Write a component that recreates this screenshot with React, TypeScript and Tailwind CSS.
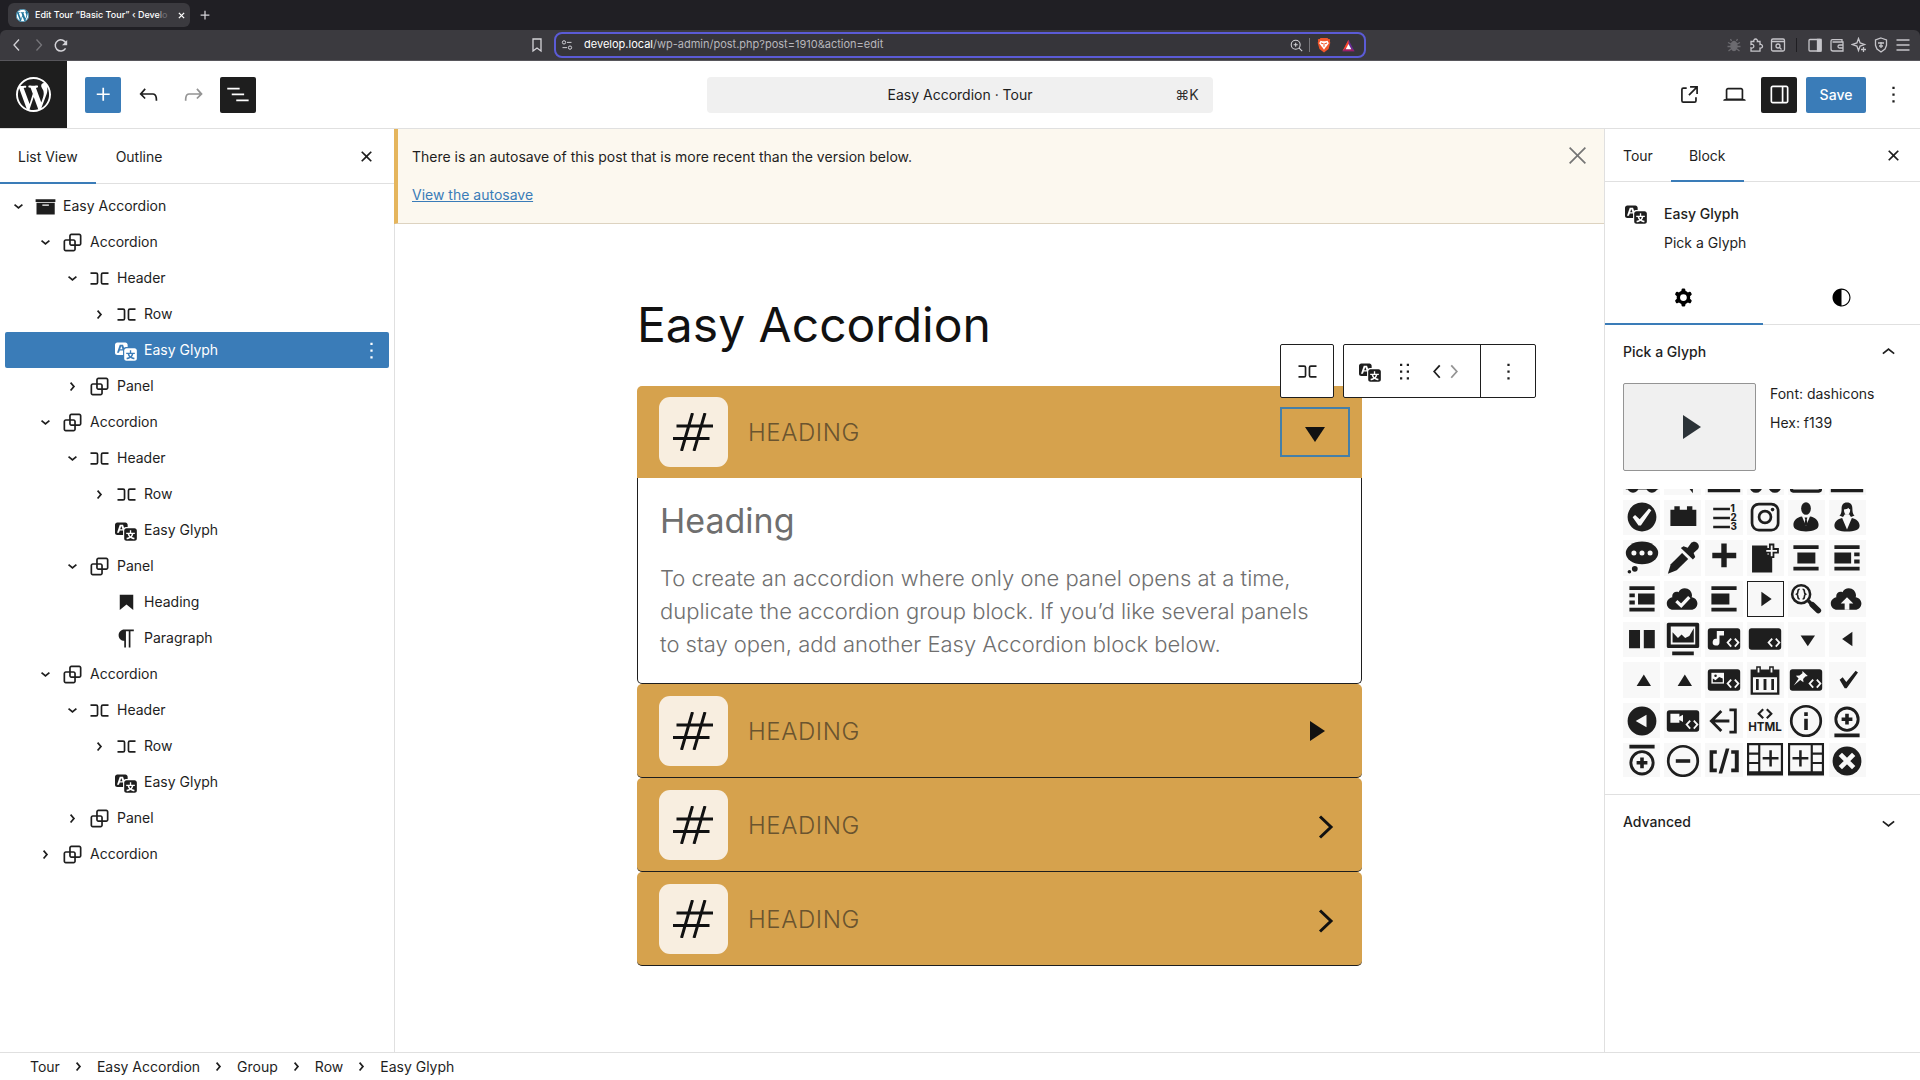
import { useState, type ReactNode } from 'react';
import clsx from 'clsx';

// 24px editor icons
const ICONS = {
  plus: 'M11 12.5V17.5H12.5V12.5H17.5V11H12.5V6H11V11H6V12.5H11Z',
  undo: 'M18.3 11.7c-.6-.6-1.4-.9-2.3-.9H6.7l2.9-3.3-1.1-1-4.5 5L8.5 16l1-1-2.7-2.7H16c.5 0 .9.2 1.3.5 1 1 1 3.4 1 4.5v.3h1.5v-.2c0-1.5 0-4.3-1.5-5.7z',
  redo: 'M15.6 6.5l-1.1 1 2.9 3.3H8c-.9 0-1.7.3-2.3.9-1.4 1.5-1.4 4.2-1.4 5.6v.2h1.5v-.3c0-1.1 0-3.5 1-4.5.3-.3.7-.5 1.3-.5h9.2L14.5 15l1.1 1.1 4.6-4.6-4.6-5z',
  listView: 'M2 6h11v1.5H2V6Zm4 5.2h11v1.5H6v-1.5ZM21 16.5H10V18h11v-1.5Z',
  external:
    'M19.5 4.5h-7V6h4.44l-5.97 5.97 1.06 1.06L18 7.06v4.44h1.5v-7Zm-13 1a2 2 0 0 0-2 2v10a2 2 0 0 0 2 2h10a2 2 0 0 0 2-2v-3H17v3a.5.5 0 0 1-.5.5h-10a.5.5 0 0 1-.5-.5v-10a.5.5 0 0 1 .5-.5h3V5.5h-3Z',
  desktop:
    'M20.5 16h-.7V8c0-1.1-.9-2-2-2H6.2c-1.1 0-2 .9-2 2v8h-.7c-.8 0-1.5.7-1.5 1.5h20c0-.8-.7-1.5-1.5-1.5zM5.7 8c0-.3.2-.5.5-.5h11.6c.3 0 .5.2.5.5v7.6H5.7V8z',
  drawer:
    'M18 4H6c-1.1 0-2 .9-2 2v12c0 1.1.9 2 2 2h12c1.1 0 2-.9 2-2V6c0-1.1-.9-2-2-2zm-4 14.5H6c-.3 0-.5-.2-.5-.5V6c0-.3.2-.5.5-.5h8v13zm4.5-.5c0 .3-.2.5-.5.5h-2.5v-13H18c.3 0 .5.2.5.5v12z',
  more: 'M13 19h-2v-2h2v2zm0-6h-2v-2h2v2zm0-6h-2V5h2v2z',
  closeSmall:
    'M12 13.06l3.712 3.713 1.061-1.06L13.061 12l3.712-3.712-1.06-1.06L12 10.938 8.288 7.227l-1.061 1.06L10.939 12l-3.712 3.712 1.06 1.061L12 13.061z',
  close:
    'm13.06 12 6.47-6.47-1.06-1.06L12 10.94 5.53 4.47 4.47 5.53 10.94 12l-6.47 6.47 1.06 1.06L12 13.06l6.47 6.47 1.06-1.06L13.06 12Z',
  chevronDown: 'M17.5 11.6L12 16l-5.5-4.4.9-1.2L12 14l4.5-3.6 1 1.2z',
  chevronUp: 'M6.5 12.4L12 8l5.5 4.4-.9 1.2L12 10l-4.5 3.6-1-1.2z',
  chevronSmall: 'M10.862 8.04l3.418 3.989-3.418 3.988-1.139-.976 2.582-3.012-2.582-3.012 1.139-.977z',
  chevronLeft: 'M14.6 7l-1.2-1L8 12l5.4 6 1.2-1-4.6-5z',
  chevronRight: 'M10.6 6L9.4 7l4.6 5-4.6 5 1.2 1 5.4-6z',
  drag: 'M8 7h2V5H8v2zm0 6h2v-2H8v2zm0 6h2v-2H8v2zm6-14v2h2V5h-2zm0 8h2v-2h-2v2zm0 6h2v-2h-2v2z',
  group:
    'M18 4h-7c-1.1 0-2 .9-2 2v3H6c-1.1 0-2 .9-2 2v7c0 1.1.9 2 2 2h7c1.1 0 2-.9 2-2v-3h3c1.1 0 2-.9 2-2V6c0-1.1-.9-2-2-2zm-4.5 14c0 .3-.2.5-.5.5H6c-.3 0-.5-.2-.5-.5v-7c0-.3.2-.5.5-.5h3V13c0 1.1.9 2 2 2h2.5v3zm0-4.5H11c-.3 0-.5-.2-.5-.5v-2.5H13c.3 0 .5.2.5.5v2.5zm5-.5c0 .3-.2.5-.5.5h-3V11c0-1.1-.9-2-2-2h-2.5V6c0-.3.2-.5.5-.5h7c.3 0 .5.2.5.5v7z',
  row: 'M4 6.5h5a2 2 0 0 1 2 2v7a2 2 0 0 1-2 2H4V16h5a.5.5 0 0 0 .5-.5v-7A.5.5 0 0 0 9 8H4V6.5Zm16 0h-5a2 2 0 0 0-2 2v7a2 2 0 0 0 2 2h5V16h-5a.5.5 0 0 1-.5-.5v-7A.5.5 0 0 1 15 8h5V6.5Z',
  heading: 'M6 5V18.591L12 13.847L18 18.591V5H6Z',
  paragraph:
    'm9.996 14v-.225l.004 0v6.225h1.5v-14.5h2.5v14.5h1.5v-14.5h3v-1.5h-8.504c-2.761 0-5 2.239-5 5 0 2.761 2.239 5 5 5z',
  cog: 'M10.289 4.836A1 1 0 0111.275 4h1.306a1 1 0 01.987.836l.244 1.466c.787.26 1.503.679 2.108 1.218l1.393-.522a1 1 0 011.216.437l.653 1.13a1 1 0 01-.23 1.273l-1.148.944a6.025 6.025 0 010 2.435l1.149.946a1 1 0 01.23 1.272l-.653 1.13a1 1 0 01-1.216.437l-1.394-.522c-.605.54-1.32.958-2.108 1.218l-.244 1.466a1 1 0 01-.987.836h-1.306a1 1 0 01-.986-.836l-.244-1.466a5.995 5.995 0 01-2.108-1.218l-1.394.522a1 1 0 01-1.217-.436l-.653-1.131a1 1 0 01.23-1.272l1.149-.946a6.026 6.026 0 010-2.435l-1.148-.944a1 1 0 01-.23-1.272l.653-1.131a1 1 0 011.217-.437l1.393.522a5.994 5.994 0 012.108-1.218l.244-1.466zM14.929 12a3 3 0 11-6 0 3 3 0 016 0z',
  styles:
    'M12 4c-4.4 0-8 3.6-8 8v.1c0 4.1 3.2 7.5 7.2 7.9h.8c4.4 0 8-3.6 8-8s-3.6-8-8-8zm0 15V5c3.9 0 7 3.1 7 7s-3.1 7-7 7z',
  archive: 'M3.2 5.6h17.6V8H3.2zM4 8.6h16.2v10.6H4zM9.2 10.2v1.2h5.8v-1.2z',
};

type IconName = keyof typeof ICONS;

function Icon({ name, className = 'size-[27px]' }: { name: IconName; className?: string }) {
  return (
    <svg viewBox="0 0 24 24" fill="currentColor" fillRule="evenodd" className={clsx('shrink-0', className)} aria-hidden="true">
      <path d={ICONS[name]} />
    </svg>
  );
}

function GlyphIcon({ className = 'size-[23px]' }: { className?: string }) {
  return (
    <svg viewBox="0 0 20 20" fill="currentColor" className={clsx('shrink-0', className)} aria-hidden="true">
      <path d="M11 7H9.49c-.63 0-1.25.3-1.59.7L7 5H4.13l-2.39 7h1.69l.74-2H7v4H2c-1.1 0-2-.9-2-2V5c0-1.1.9-2 2-2h7c1.1 0 2 .9 2 2v2zM6.51 9H4.49l1-2.93zM10 8h7c1.1 0 2 .9 2 2v7c0 1.1-.9 2-2 2h-7c-1.1 0-2-.9-2-2v-7c0-1.1.9-2 2-2zm7.25 5v-1.08h-3.17V9.75h-1.16v2.17H9.75V13h1.28c.11.85.56 1.85 1.28 2.62-.87.36-1.89.62-2.31.62-.01.02.22.97.2 1.46.84 0 2.21-.5 3.28-1.15 1.09.65 2.48 1.15 3.34 1.15-.02-.49.2-1.44.2-1.46-.43 0-1.49-.27-2.38-.63.7-.77 1.14-1.77 1.25-2.61h1.36zm-3.81 1.93c-.5-.46-.85-1.13-1.01-1.93h2.09c-.17.8-.51 1.47-1 1.93l-.04.03s-.03-.02-.04-.03z" />
    </svg>
  );
}

function WordPressLogo({ className }: { className: string }) {
  return (
    <svg viewBox="0 0 20 20" fill="currentColor" className={className} aria-hidden="true">
      <path d="M20 10c0-5.51-4.49-10-10-10C4.48 0 0 4.49 0 10c0 5.52 4.48 10 10 10 5.51 0 10-4.48 10-10zM7.78 15.37L4.37 6.22c.55-.02 1.17-.08 1.17-.08.5-.06.44-1.13-.06-1.11 0 0-1.45.11-2.37.11-.18 0-.37 0-.58-.01C4.12 2.69 6.87 1.11 10 1.11c2.33 0 4.45.87 6.05 2.34-.68-.11-1.65.39-1.65 1.58 0 .74.45 1.36.9 2.1.35.61.55 1.36.55 2.46 0 1.49-1.4 5-1.4 5l-3.03-8.37c.54-.02.82-.17.82-.17.5-.05.44-1.25-.06-1.22 0 0-1.44.12-2.38.12-.87 0-2.33-.12-2.33-.12-.5-.03-.56 1.2-.06 1.22l.92.08 1.26 3.41zM17.41 10c.24-.64.74-1.87.43-4.25.7 1.29 1.05 2.71 1.05 4.25 0 3.29-1.73 6.24-4.4 7.78.97-2.59 1.94-5.2 2.92-7.78zM6.1 18.09C3.12 16.65 1.11 13.53 1.11 10c0-1.3.23-2.48.72-3.59C3.25 10.3 4.67 14.2 6.1 18.09zm4.03-6.63l2.58 6.98c-.86.29-1.76.45-2.71.45-.79 0-1.57-.11-2.29-.33.81-2.38 1.62-4.74 2.42-7.1z" />
    </svg>
  );
}

/* ---------- Browser chrome ---------- */

function ChromeIcon({ label, children, className = 'size-4' }: { label: string; children: ReactNode; className?: string }) {
  return (
    <button type="button" aria-label={label} className="flex w-[22px] shrink-0 items-center justify-center">
      <svg viewBox="0 0 16 16" fill="none" stroke="currentColor" strokeWidth="1.3" className={className}>
        {children}
      </svg>
    </button>
  );
}

function BrowserChrome() {
  return (
    <div className="shrink-0 bg-[#201f24] text-[11px] text-[#d4d3d8]">
      <div className="flex h-[30px] items-center gap-2.5 pl-2">
        <div className="flex h-6 w-[182px] items-center gap-1.5 rounded-md bg-[#3b3a3f] pl-2 pr-1">
          <span className="flex size-[13px] shrink-0 items-center justify-center rounded-full bg-white">
            <WordPressLogo className="size-[13px] text-[#21759b]" />
          </span>
          <span className="flex-1 whitespace-nowrap text-[9px] font-medium text-white">
            Edit Tour “Basic Tour” ‹ Deve<span className="text-[#9b9a9f]">l</span>
            <span className="text-[#6c6b70]">o</span>
          </span>
          <button type="button" aria-label="Close tab" className="flex w-4 shrink-0 justify-center text-white">
            <svg viewBox="0 0 8 8" className="size-[7px]" stroke="currentColor" strokeWidth="1.5">
              <path d="M1 1l6 6M7 1L1 7" />
            </svg>
          </button>
        </div>
        <button type="button" aria-label="New tab">
          <svg viewBox="0 0 8 8" className="size-2.5" stroke="currentColor" strokeWidth="1">
            <path d="M4 .5v7M.5 4h7" />
          </svg>
        </button>
      </div>
      <div className="flex h-[31px] items-center rounded-t-md border-b border-[#57565b] bg-[#3b3a3f]">
        <div className="flex flex-1 items-center justify-between px-1.5">
          <div className="flex">
            <ChromeIcon label="Back">
              <path d="M10 2.5L5 8l5 5.5" />
            </ChromeIcon>
            <span className="text-[#77767b]">
              <ChromeIcon label="Forward">
                <path d="M5.5 2.5l5 5.5-5 5.5" />
              </ChromeIcon>
            </span>
            <ChromeIcon label="Reload">
              <path d="M12.6 11.4A5.6 5.6 0 1 1 13.2 6.8" strokeWidth="1.5" />
              <path d="M14.2 3v5.3H9z" fill="currentColor" stroke="none" />
            </ChromeIcon>
          </div>
          <ChromeIcon label="Bookmark">
            <path d="M4 2h8v12l-4-3-4 3z" />
          </ChromeIcon>
        </div>
        <div className="flex h-[26px] w-[812px] items-center rounded-lg border-2 border-[#5b5bd6] bg-[#36353a] pr-1">
          <ChromeIcon label="Site settings" className="size-3">
            <circle cx="4" cy="4.5" r="2.2" />
            <path d="M8 4.5h6M2 11.5h6" />
            <circle cx="12" cy="11.5" r="2.2" />
          </ChromeIcon>
          <span className="flex-1 pl-1.5 text-[#b8b7bc]">
            <span className="text-white">develop.local</span>/wp-admin/post.php?post=1910&amp;action=edit
          </span>
          <ChromeIcon label="Zoom" className="size-[13px]">
            <circle cx="7" cy="7" r="5.5" />
            <path d="M11 11l4 4M7 4.5v5M4.5 7h5" />
          </ChromeIcon>
          <span className="mx-0.5 h-3.5 w-px bg-[#77767b]" />
          <button type="button" aria-label="Brave Shields" className="flex w-6 justify-center">
            <svg viewBox="0 0 16 18" className="h-4 w-3.5">
              <path d="M4 1h8l1 1 2 .5-.3 2.5.5 1.5-2 7-5.2 4-5.2-4-2-7L1.3 5 1 2.5 3 2z" fill="#f1562b" />
              <path d="M4 4l2.5.8h3L12 4l1.5 3-2.5 3.5L9.500 12 8 14.500 6.500 12 5 10.500 2.500 7z" fill="#fff" />
              <path d="M4.500 6.800l2.500.7M11.500 6.800L9 7.500M8 7v4" stroke="#f1562b" strokeWidth="1.2" />
            </svg>
          </button>
          <button type="button" aria-label="Brave Rewards" className="flex w-6 justify-center">
            <svg viewBox="0 0 16 16" className="size-[13px]">
              <path d="M8 1L.5 15h15z" fill="#662d91" />
              <path d="M8 1L.5 15 8 9z" fill="#ff4724" />
              <path d="M.5 15h15L8 9z" fill="#9e1f63" />
              <path d="M8 6l-3.500 6.500h7z" fill="#fff" />
            </svg>
          </button>
        </div>
        <div className="flex flex-1 items-center justify-end px-1.5 text-[#c6c5ca]">
          <span className="text-[#6c6b70]">
            <ChromeIcon label="Debugger">
              <ellipse cx="8" cy="9" rx="3" ry="4.5" fill="currentColor" />
              <path d="M5.500 4l-1-2M10.500 4l1-2M5 7L2 5.500M5 9.500H1.500M5 12l-2.500 2M11 7l3-1.500M11 9.500h3.500M11 12l2.500 2" />
            </ChromeIcon>
          </span>
          <ChromeIcon label="Extensions">
            <path d="M3 4.500h2.800a1.900 1.900 0 1 1 3.600 0H12v3a1.900 1.900 0 1 1 0 3.600v3H3v-3.300a1.900 1.900 0 1 0 0-3.300z" />
          </ChromeIcon>
          <ChromeIcon label="Search tabs">
            <rect x="1.5" y="2" width="13" height="12" rx="1.5" />
            <path d="M1.500 4.500h13M9.700 10.700l1.800 1.800" />
            <circle cx="8" cy="9" r="2" />
          </ChromeIcon>
          <span className="mx-[7px] h-3.5 w-px bg-[#1f1e22]" />
          <ChromeIcon label="Side panel">
            <rect x="2" y="2.5" width="12" height="11.5" rx="1" />
            <path d="M10.500 2.500H14V14h-3.500z" fill="currentColor" />
          </ChromeIcon>
          <ChromeIcon label="Wallet">
            <path d="M13 5V2.700H3.500A1.500 1.500 0 0 0 2 4.200V12a2 2 0 0 0 2 2h10V5H3.500M14 8h-3.500a1.500 1.500 0 0 0 0 3H14" />
          </ChromeIcon>
          <ChromeIcon label="Assistant">
            <path d="M7.500 1.500l1.600 4.400 4.400 1.600-4.400 1.600-1.600 4.400-1.600-4.400L1.500 7.500l4.400-1.600z" />
            <path d="M12.500 10v5M10 12.500h5" />
          </ChromeIcon>
          <ChromeIcon label="VPN">
            <path d="M8 1l5.500 2v5.300L12 12l-4 3-4-3-1.500-3.700V3z" />
            <path d="M5 6h6M8 5v6M6 9h4" />
          </ChromeIcon>
          <ChromeIcon label="Menu">
            <path d="M1.500 3h13M1.500 8h13M1.500 13h13" strokeWidth="1.5" />
          </ChromeIcon>
        </div>
      </div>
    </div>
  );
}

/* ---------- Editor header ---------- */

function EditorHeader() {
  return (
    <header className="flex h-[68px] shrink-0 items-center border-b border-[#e0e0e0]">
      <div className="flex h-full flex-1 items-center gap-[9px]">
        <a href="#dashboard" aria-label="Dashboard" className="mr-[9px] flex h-full w-[67px] items-center justify-center bg-[#1e1e1e]">
          <WordPressLogo className="size-[35px] text-white" />
        </a>
        <button type="button" aria-label="Block inserter" className="flex size-9 items-center justify-center rounded-xs bg-[#3a7cb8] text-white">
          <Icon name="plus" />
        </button>
        <button type="button" aria-label="Undo" className="flex size-9 items-center justify-center">
          <Icon name="undo" />
        </button>
        <button type="button" aria-label="Redo" disabled className="flex size-9 items-center justify-center text-[#949494]">
          <Icon name="redo" />
        </button>
        <button type="button" aria-label="Document overview" className="flex size-9 items-center justify-center rounded-xs bg-[#1e1e1e] text-white">
          <Icon name="listView" />
        </button>
      </div>
      <button type="button" className="flex h-9 w-[506px] items-center rounded-[4px] bg-[#f0f0f0] px-2.5">
        <span className="w-8" />
        <span className="flex-1 text-center">Easy Accordion · Tour</span>
        <kbd className="w-8 text-center font-[Inter,'DejaVu_Sans',sans-serif] text-[#2f2f2f]">⌘K</kbd>
      </button>
      <div className="flex flex-1 items-center justify-end gap-[9px]">
        <a href="#view" aria-label="View tour" className="flex size-9 items-center justify-center">
          <Icon name="external" />
        </a>
        <button type="button" aria-label="Preview" className="flex size-9 items-center justify-center">
          <Icon name="desktop" />
        </button>
        <button type="button" aria-label="Settings" className="flex size-9 items-center justify-center rounded-xs bg-[#1e1e1e] text-white">
          <Icon name="drawer" />
        </button>
        <button type="button" className="h-9 w-[60px] rounded-xs bg-[#3a7cb8] font-medium text-white">
          Save
        </button>
        <button type="button" aria-label="Options" className="mr-[9px] flex size-9 items-center justify-center">
          <Icon name="more" />
        </button>
      </div>
    </header>
  );
}

/* ---------- List view ---------- */

type TreeItem = { label: string; level: number; icon: IconName | 'glyph'; open?: boolean; selected?: boolean };

const TREE: TreeItem[] = [
  { label: 'Easy Accordion', level: 0, icon: 'archive', open: true },
  { label: 'Accordion', level: 1, icon: 'group', open: true },
  { label: 'Header', level: 2, icon: 'row', open: true },
  { label: 'Row', level: 3, icon: 'row', open: false },
  { label: 'Easy Glyph', level: 3, icon: 'glyph', selected: true },
  { label: 'Panel', level: 2, icon: 'group', open: false },
  { label: 'Accordion', level: 1, icon: 'group', open: true },
  { label: 'Header', level: 2, icon: 'row', open: true },
  { label: 'Row', level: 3, icon: 'row', open: false },
  { label: 'Easy Glyph', level: 3, icon: 'glyph' },
  { label: 'Panel', level: 2, icon: 'group', open: true },
  { label: 'Heading', level: 3, icon: 'heading' },
  { label: 'Paragraph', level: 3, icon: 'paragraph' },
  { label: 'Accordion', level: 1, icon: 'group', open: true },
  { label: 'Header', level: 2, icon: 'row', open: true },
  { label: 'Row', level: 3, icon: 'row', open: false },
  { label: 'Easy Glyph', level: 3, icon: 'glyph' },
  { label: 'Panel', level: 2, icon: 'group', open: false },
  { label: 'Accordion', level: 1, icon: 'group', open: false },
];

const INDENT = ['pl-0', 'pl-[27px]', 'pl-[54px]', 'pl-[81px]'];

function ListView() {
  return (
    <aside className="w-[394px] shrink-0">
      <div className="flex h-[55px] items-stretch border-b border-[#e0e0e0]">
        <button type="button" className="-mb-px border-b-2 border-[#3a7cb8] px-[18px] pt-0.5">
          List View
        </button>
        <button type="button" className="px-5 pt-px">
          Outline
        </button>
        <button type="button" aria-label="Close" className="ml-auto mr-3.5">
          <Icon name="closeSmall" />
        </button>
      </div>
      <ul className="px-[5px] py-1">
        {TREE.map((item, i) => (
          <li
            key={i}
            className={clsx(
              'flex h-9 items-center rounded-xs',
              INDENT[item.level],
              item.selected && 'bg-[#3a7cb8] text-white',
            )}
          >
            <span className="flex w-[27px] justify-center">
              {item.open !== undefined && (
                <button type="button" aria-label={`Toggle ${item.label}`}>
                  <Icon name="chevronSmall" className={clsx('size-[27px]', item.open && 'rotate-90')} />
                </button>
              )}
            </span>
            <a href="#block" className="flex items-center gap-1">
              <span className="flex w-[27px] justify-center">
                {item.icon === 'glyph' ? <GlyphIcon /> : <Icon name={item.icon} />}
              </span>
              {item.label}
            </a>
            {item.selected && (
              <button type="button" aria-label="Options" className="ml-auto mr-1">
                <Icon name="more" />
              </button>
            )}
          </li>
        ))}
      </ul>
    </aside>
  );
}

/* ---------- Canvas ---------- */

function BlockToolbar() {
  return (
    <div className="absolute -top-[65px] -left-0.5 z-10 flex gap-[9px] text-[#1e1e1e]">
      <button type="button" aria-label="Select parent: Row" className="flex size-[54px] items-center justify-center rounded-xs border border-[#1e1e1e] bg-white">
        <Icon name="row" />
      </button>
      <div className="flex h-[54px] rounded-xs border border-[#1e1e1e] bg-white">
        <div className="flex w-[137px] items-center border-r border-[#1e1e1e] pl-[15px]">
          <button type="button" aria-label="Easy Glyph">
            <GlyphIcon />
          </button>
          <button type="button" aria-label="Drag" className="ml-[9px]">
            <Icon name="drag" />
          </button>
          <button type="button" aria-label="Move left" className="ml-2.5 w-4">
            <Icon name="chevronLeft" className="-ml-1 size-[27px]" />
          </button>
          <button type="button" aria-label="Move right" className="w-4 text-[#949494]">
            <Icon name="chevronRight" className="-ml-1 size-[27px]" />
          </button>
        </div>
        <button type="button" aria-label="Options" className="flex w-[54px] items-center justify-center">
          <Icon name="more" />
        </button>
      </div>
    </div>
  );
}

function AccordionHeader({ variant }: { variant: 'down' | 'right' | 'chevron' }) {
  const open = variant === 'down';
  return (
    <div
      className={clsx(
        'flex items-center justify-between bg-[#d6a24d] pl-[22px] pr-3',
        open ? 'h-[92px] rounded-t-[5px]' : 'h-[94px] rounded-[5px] border-b border-[#1e1e1e]',
      )}
    >
      <div className="flex items-center gap-5">
        <span className="flex h-[70px] w-[69px] items-center justify-center rounded-[11px] bg-[#f8eee0] pr-0.5">
          <svg viewBox="0 0 40 38" className="h-[38px] w-10" stroke="#111" strokeWidth="3" aria-label="Number sign">
            <path d="M19.5 0l-11 38M32 0L21 38M3.5 13H40M0 25.5h36.5" />
          </svg>
        </span>
        <span className="pt-0.5 text-2xl font-light uppercase tracking-wide text-[#6a542f]">Heading</span>
      </div>
      {open ? (
        <div className="relative flex h-[50px] w-[70px] items-center justify-center border-2 border-[#447fa8]">
          <svg viewBox="0 0 20 15" className="mt-1 h-[15px] w-5" fill="#111">
            <path d="M0 0h20L10 15z" />
          </svg>
          <BlockToolbar />
        </div>
      ) : (
        <button type="button" aria-label="Expand" className={variant === 'right' ? 'mr-[25px]' : 'mr-4 mt-1'}>
          {variant === 'right' ? (
            <svg viewBox="0 0 15 20" className="h-5 w-[15px]" fill="#111">
              <path d="M0 0v20L15 10z" />
            </svg>
          ) : (
            <svg viewBox="0 0 16 24" className="h-6 w-4" fill="none" stroke="#111" strokeWidth="3">
              <path d="M2 1.5L13 12 2 22.5" />
            </svg>
          )}
        </button>
      )}
    </div>
  );
}

function Canvas() {
  return (
    <main className="flex min-w-0 flex-1 flex-col">
      <div className="flex h-[95px] items-start justify-between border-b border-l-4 border-b-[#ddd3c0] border-l-[#e5b55c] bg-[#fcf8ef] py-[13px] pl-3.5 pr-[13px]">
        <div>
          <p className="h-[38px] leading-[30px]">There is an autosave of this post that is more recent than the version below.</p>
          <a href="#autosave" className="leading-[30px] text-[#3a7cb8] underline">
            View the autosave
          </a>
        </div>
        <button type="button" aria-label="Dismiss" className="text-[#757575]">
          <Icon name="close" />
        </button>
      </div>
      <div className="flex-1 border-l border-[#e0e0e0] px-6">
        <div className="mx-auto w-full max-w-[725px] pt-[70px] text-[#111]">
          <h1 className="text-5xl leading-[62px]">Easy Accordion</h1>
          <div className="mt-[30px]">
            <AccordionHeader variant="down" />
            <section className="h-[206px] rounded-b-[5px] border border-t-0 border-[#1e1e1e] px-[22px] pt-5 text-[#6f6f6f]">
              <h2 className="text-[34px] leading-[46px]">Heading</h2>
              <p className="mt-[18px] pr-6 text-[22px] font-light leading-[33px]">
                To create an accordion where only one panel opens at a time, duplicate the accordion group block. If
                you’d like several panels to stay open, add another Easy Accordion block below.
              </p>
            </section>
            <AccordionHeader variant="right" />
            <AccordionHeader variant="chevron" />
            <AccordionHeader variant="chevron" />
          </div>
        </div>
      </div>
    </main>
  );
}

/* ---------- Glyph picker ---------- */

// Drawn on a 20 unit grid; "knockout" shapes use the cell background
const BG = '#f8f8f8';
const CLOUD =
  'M14.8 9c.1-.3.2-.6.2-1 0-2.2-1.8-4-4-4-1.5 0-2.9.9-3.5 2.2-.3-.1-.7-.2-1-.2C5.1 6 4 7.1 4 8.5c0 .2 0 .4.1.5-1.8.3-3.1 1.7-3.1 3.5C1 14.4 2.6 16 4.5 16h10c1.9 0 3.5-1.6 3.5-3.5 0-1.8-1.4-3.3-3.2-3.5z';
const BARS = 'M3 2.9h14V5H3zM3 14.9h14V17H3z';

const embed = (inner?: ReactNode) => (
  <>
    <rect x="1" y="4" width="18" height="12" rx="1.5" />
    <path d="M14 9.8L12 12l2 2.2M16 9.8l2 2.2-2 2.2" fill="none" stroke={BG} strokeWidth="1" />
    {inner}
  </>
);

const GLYPHS: { name: string; art: ReactNode }[] = [
  { name: 'car', art: <><circle cx="5" cy="15.5" r="3.2" /><circle cx="15.5" cy="15.5" r="3.2" /><path d="M1 14h18v3H1z" /></> },
  { name: 'megaphone', art: <path d="M11.5 14h4v5z" /> },
  { name: 'cover', art: <path d="M1 16h18v2.5H1z" /> },
  { name: 'binoculars', art: <><circle cx="5" cy="15.3" r="3.5" /><circle cx="15.5" cy="15.3" r="3.5" /></> },
  { name: 'frame', art: <rect x="2" y="8" width="16" height="9.8" rx=".8" fill="none" stroke="currentColor" strokeWidth="1.8" /> },
  { name: 'button', art: <path d="M1 16.5h18v2H1z" /> },

  {
    name: 'yes-alt',
    art: <path d="M10 2c-4.42 0-8 3.58-8 8s3.58 8 8 8 8-3.58 8-8-3.58-8-8-8zm-.615 12.66h-1.34l-3.24-4.54 1.341-1.25 2.569 2.4 5.141-5.931 1.34.94-5.811 8.381z" />,
  },
  { name: 'block-default', art: <path d="M3 6h2.2V4h3v2h4V4h3v2h2.2v9H3z" /> },
  {
    name: 'editor-ol',
    art: (
      <>
        <path d="M4 4.9h9.3v1.4H4zM4 9.9h9.3v1.4H4zM4 14.9h9.3v1.4H4z" />
        <text x="13.6" y="7" fontSize="5.4" fontWeight="800">1</text>
        <text x="13.6" y="12.2" fontSize="5.4" fontWeight="800">2</text>
        <text x="13.6" y="17.4" fontSize="5.4" fontWeight="800">3</text>
      </>
    ),
  },
  {
    name: 'instagram',
    art: (
      <>
        <g fill="none" stroke="currentColor" strokeWidth="1.5">
          <rect x="2.8" y="2.8" width="14.5" height="14.5" rx="3.8" />
          <circle cx="10" cy="10" r="3.3" />
        </g>
        <circle cx="14.2" cy="5.9" r="1" />
      </>
    ),
  },
  {
    name: 'businessman',
    art: (
      <>
        <ellipse cx="10" cy="5.3" rx="2.7" ry="3.5" />
        <path d="M7.8 9.7L10 15l2.2-5.3c2.8.4 4.8 2 4.8 4.8 0 2.5-3 3.5-7 3.5s-7-1-7-3.5c0-2.8 2-4.4 4.8-4.8z" />
        <path d="M9.2 10.3h1.6l-.4 1.2.5 2.2-.9 1.3-.9-1.3.5-2.2z" />
      </>
    ),
  },
  {
    name: 'businesswoman',
    art: (
      <>
        <path d="M10 2c-2.2 0-3 1.5-3 3.5C7 7 6.8 8.5 5.8 9.2l2 .8 1-1.5h2.4l1 1.5 2-.8C13.2 8.5 13 7 13 5.5 13 3.5 12.2 2 10 2z" />
        <path d="M7.3 10.5L10 17l2.7-6.5c2.5.5 4.3 2 4.3 4.3 0 2.3-3 3.2-7 3.2s-7-.9-7-3.2c0-2.3 1.8-3.8 4.3-4.3z" />
        <path d="M8.3 5.8c1.2 0 2-.4 2.5-1 .2.6.5.9 1 1 0 1.8-.8 3-1.8 3s-1.7-1.2-1.7-3zM9 11h2l-1 4z" fill={BG} />
      </>
    ),
  },

  {
    name: 'thought',
    art: (
      <>
        <ellipse cx="10" cy="7.2" rx="9" ry="6.3" />
        <circle cx="6" cy="16" r="1.6" />
        <circle cx="3" cy="17.6" r="1" />
        <g fill={BG}>
          <circle cx="5.5" cy="7.2" r="1.4" />
          <circle cx="10" cy="7.2" r="1.4" />
          <circle cx="14.5" cy="7.2" r="1.4" />
        </g>
      </>
    ),
  },
  {
    name: 'color-picker',
    art: (
      <>
        <path d="M9.5 7.2l3.4 3.4-6.4 6.2-4.9 1.9 1.6-5.2z" />
        <path d="M8.8 4.5l1.5-1 2.3.8 1.7-2.4c2.3-2.5 6 .8 3.9 3.3l-2.3 2 .9 2.2-1.3 1.5z" />
      </>
    ),
  },
  { name: 'plus-alt', art: <path d="M8.5 2h3v5.1h5.3v3h-5.3v5.1h-3v-5.1H3.5v-3h5z" /> },
  {
    name: 'welcome-add-page',
    art: (
      <>
        <path d="M2.8 3h8.5v5h2.7v10H2.8z" />
        <path d="M12.2 2h3v2.5h2.5v3h-2.500V10h-3V7.5H9.7v-3h2.5z" />
        <path d="M13.2 3h1v2.5h2.5v1h-2.500V9h-1V6.5h-2.500v-1h2.5z" fill={BG} />
      </>
    ),
  },
  { name: 'align-center', art: <path d={BARS + 'M5.2 6.9h10V13h-10z'} /> },
  { name: 'align-pull-left', art: <path d={BARS + 'M3 6.9h9.3V13H3zM14 6.9h3V9h-3zM14 10.9h3V13h-3z'} /> },

  { name: 'align-pull-right', art: <path d={BARS + 'M7.8 6.9H17V13H7.8zM3 6.9h3V9H3zM3 10.9h3V13H3z'} /> },
  {
    name: 'cloud-saved',
    art: (
      <>
        <path d={CLOUD} />
        <path d="M6.3 11.2L9 13.7l4.5-4.8" fill="none" stroke={BG} strokeWidth="1.8" />
      </>
    ),
  },
  { name: 'align-left', art: <path d={BARS + 'M3 6.9h10V13H3z'} /> },
  { name: 'arrow-right', art: <path d="M8 6l5.7 4L8 14z" /> },
  {
    name: 'code-search',
    art: (
      <>
        <circle cx="7.3" cy="7.3" r="5" fill="none" stroke="currentColor" strokeWidth="1.4" />
        <path d="M6.5 4.6c-1 0-1 .4-1 1.2s0 1.1-.7 1.5c.7.4.7.7.7 1.5s0 1.2 1 1.2M8.1 4.6c1 0 1 .4 1 1.2s0 1.1.7 1.5c-.7.4-.7.7-.7 1.5s0 1.2-1 1.2" fill="none" stroke="currentColor" strokeWidth=".9" />
        <path d="M11.3 11l2 2" stroke="currentColor" strokeWidth="2" />
        <path d="M13.5 13.2l3.3 3.2" stroke="currentColor" strokeWidth="3.2" strokeLinecap="round" />
      </>
    ),
  },
  {
    name: 'cloud-upload',
    art: (
      <>
        <path d={CLOUD} />
        <path d="M10 9l3.5 3.5h-2.2V16H8.7v-3.5H6.5z" fill={BG} />
      </>
    ),
  },

  { name: 'columns', art: <path d="M2.8 5h6.1v10.2H2.8zM11 5h6.1v10.2H11z" /> },
  {
    name: 'analytics',
    art: (
      <>
        <path fillRule="evenodd" d="M2 1h16c.7 0 1 .4 1 1v12c0 .6-.3 1-1 1H2c-.7 0-1-.4-1-1V2c0-.6.3-1 1-1zm1.2 2v10h13.6V3zM4 17h12v2H4z" />
        <path d="M4.2 6.2l3 3.3 2-2 2 2 2.3-1.2L16 4v8H4.2z" />
      </>
    ),
  },
  {
    name: 'embed-audio',
    art: embed(<path d="M6 5.5h4V8H7.5v3.8a1.9 1.9 0 1 1-1.5-1.9z" fill={BG} />),
  },
  { name: 'embed-generic', art: embed() },
  { name: 'arrow-down', art: <path d="M7 8h8l-4 6z" /> },
  { name: 'arrow-left', art: <path d="M13 6v8L7.3 10z" /> },

  { name: 'arrow-up', art: <path d="M7 13.3L11 7l4 6.3z" /> },
  { name: 'arrow-up-alt', art: <path d="M7 13.3L11 7l4 6.3z" /> },
  {
    name: 'embed-photo',
    art: embed(
      <>
        <path d="M3 6h7v6H3z" fill={BG} />
        <path d="M3.8 11.2v-2l1.5 1 2-1.8 2 .8v2z" />
        <circle cx="5.3" cy="7.7" r=".7" />
      </>,
    ),
  },
  {
    name: 'calendar-alt',
    art: (
      <>
        <path fillRule="evenodd" d="M2 4.2h16v14H2zm1.3 4.3v8.4h13.4V8.5z" />
        <path d="M5 9.5h1.5v6H5zM9.2 9.5h1.6v6H9.2zM13.5 9.5H15v6h-1.5z" />
        <path d="M5.5 2.8h1.8v3.5H5.500zM12.7 2.8h1.8v3.5h-1.800z" fill={BG} stroke="currentColor" strokeWidth=".8" />
      </>
    ),
  },
  {
    name: 'embed-post',
    art: embed(<path d="M8 5l3 2.8-1.3.2-1.3 1.5.2 1.8-1.8-1.3L3.2 13l2.7-3.9-1.5-1.4 2-.2L8 6.2z" fill={BG} />),
  },
  { name: 'yes', art: <path d="M14.8 4.9l1.3.9-6.3 8.8H8.7L5.9 9.8l1.7-1.3 2 2.6z" /> },

  { name: 'arrow-left-circle', art: <path fillRule="evenodd" d="M10 2a8 8 0 1 0 0 16 8 8 0 0 0 0-16zm2.5 4.5v7L6.5 10z" /> },
  {
    name: 'embed-video',
    art: embed(<path d="M3 6h5v1.7l2-1.2v4l-2-1V11H3z" fill={BG} />),
  },
  {
    name: 'exit',
    art: <path d="M13 3.8h3.3v12.4H13M13 10H3M8.5 4.5L3 10l5.5 5.5" fill="none" stroke="currentColor" strokeWidth="1.6" />,
  },
  {
    name: 'html',
    art: (
      <>
        <path d="M9 3.5L6.5 6 9 8.5M11 3.5L13.5 6 11 8.5" fill="none" stroke="currentColor" strokeWidth="1.2" />
        <text x="10" y="15.8" fontSize="6.4" fontWeight="700" textAnchor="middle">HTML</text>
      </>
    ),
  },
  {
    name: 'info-outline',
    art: (
      <>
        <circle cx="10" cy="10" r="8.2" fill="none" stroke="currentColor" strokeWidth="1.5" />
        <path d="M9 8.8h2V15H9zM9 5.2h2v2H9z" />
      </>
    ),
  },
  {
    name: 'insert-after',
    art: (
      <>
        <circle cx="10" cy="9" r="6.2" fill="none" stroke="currentColor" strokeWidth="1.6" />
        <path d="M9 6h2v2h2v2h-2v2H9v-2H7V8h2zM3 17h14v2H3z" />
      </>
    ),
  },

  {
    name: 'insert-before',
    art: (
      <>
        <circle cx="10" cy="11" r="6.2" fill="none" stroke="currentColor" strokeWidth="1.6" />
        <path d="M9 8h2v2h2v2h-2v2H9v-2H7v-2h2zM3 1h14v2H3z" />
      </>
    ),
  },
  {
    name: 'remove',
    art: (
      <>
        <circle cx="10" cy="10" r="8.2" fill="none" stroke="currentColor" strokeWidth="1.5" />
        <path d="M6 9h8v2H6z" />
      </>
    ),
  },
  { name: 'shortcode', art: <path d="M6 14.2v2H2V4h4v2H4v8.2zM16 14.2V6h-2V4h4.2v12.2H14v-2zM7 17h2l4-14h-2z" /> },
  {
    name: 'table-col-before',
    art: (
      <path
        fillRule="evenodd"
        d="M0 0h20v18H0zM1.2 1.3v4h5v-4zm6.2 0v14.4h11.4V1.3zM1.2 6.5v4h5v-4zm0 5.2v4h5v-4zM12.4 4h1.4v3.8h3.7v1.4h-3.7V13h-1.4V9.2H8.7V7.8h3.7z"
      />
    ),
  },
  {
    name: 'table-col-after',
    art: (
      <path
        fillRule="evenodd"
        d="M0 0h20v18H0zM13.8 1.3v4h5v-4zM1.2 1.3v14.4h11.4V1.3zM13.8 6.5v4h5v-4zm0 5.2v4h5v-4zM6.2 4h1.4v3.8h3.7v1.4H7.6V13H6.2V9.2H2.5V7.8h3.7z"
      />
    ),
  },
  {
    name: 'dismiss',
    art: (
      <>
        <circle cx="10" cy="10" r="8" />
        <path d="M6.3 6.3l7.4 7.4M13.7 6.3l-7.4 7.4" stroke={BG} strokeWidth="2.6" />
      </>
    ),
  },
];

function GlyphPicker() {
  const [selected, setSelected] = useState('arrow-right');

  return (
    <div className="mt-[18px] h-[288px] w-[243px] overflow-hidden">
      <div className="-mt-[30px] grid h-80 grid-cols-6 grid-rows-8 gap-x-1 gap-y-[5px]">
        {GLYPHS.map((g) => (
          <button
            key={g.name}
            type="button"
            aria-label={g.name}
            onClick={() => setSelected(g.name)}
            className={clsx(
              'flex items-center justify-center overflow-hidden bg-[#f8f8f8]',
              g.name === selected && 'outline-1 -outline-offset-1 outline-[#1e1e1e]',
            )}
          >
            <svg viewBox="0 0 20 20" className="size-9 shrink-0" fill="currentColor">
              {g.art}
            </svg>
          </button>
        ))}
      </div>
    </div>
  );
}

/* ---------- Settings sidebar ---------- */

function SettingsSidebar() {
  return (
    <aside className="w-[316px] shrink-0 border-l border-[#e0e0e0]">
      <div className="flex h-[53px] items-stretch border-b border-[#e0e0e0]">
        <button type="button" className="px-[18px] pt-px">
          Tour
        </button>
        <button type="button" className="-mb-px border-b-2 border-[#3a7cb8] px-[18px] pt-0.5">
          Block
        </button>
        <button type="button" aria-label="Close settings" className="ml-auto mr-[13px]">
          <Icon name="closeSmall" />
        </button>
      </div>
      <div className="flex gap-4 px-5 pt-[17px]">
        <span className="pt-[3px]">
          <GlyphIcon />
        </span>
        <div className="leading-[29px]">
          <h2 className="font-medium">Easy Glyph</h2>
          <p>Pick a Glyph</p>
        </div>
      </div>
      <div className="mt-3.5 flex h-[54px] border-b border-[#e0e0e0] text-black">
        <button type="button" aria-label="Settings" className="-mb-px flex flex-1 items-center justify-center border-b-2 border-[#3a7cb8]">
          <Icon name="cog" />
        </button>
        <button type="button" aria-label="Styles" className="flex flex-1 items-center justify-center">
          <Icon name="styles" />
        </button>
      </div>
      <section className="border-b border-[#e0e0e0] pl-[18px] pb-[17px]">
        <button type="button" className="flex h-[54px] w-full items-center justify-between pr-[18px] font-medium">
          Pick a Glyph
          <Icon name="chevronUp" />
        </button>
        <div className="mt-1 flex gap-3.5">
          <div className="flex h-[88px] w-[133px] items-center justify-center rounded-xs border border-[#949494] bg-[#f0f0f0]">
            <svg viewBox="0 0 18 24" className="ml-1 h-6 w-[18px]" fill="#2c3338">
              <path d="M0 0v24l18-12z" />
            </svg>
          </div>
          <div className="-mt-1 leading-[29px]">
            <p>Font: dashicons</p>
            <p>Hex: f139</p>
          </div>
        </div>
        <GlyphPicker />
      </section>
      <button type="button" className="flex h-[54px] w-full items-center justify-between px-[18px] font-medium">
        Advanced
        <Icon name="chevronDown" />
      </button>
    </aside>
  );
}

const CRUMBS = ['Tour', 'Easy Accordion', 'Group', 'Row', 'Easy Glyph'];

export default function App() {
  return (
    <div className="flex min-h-screen flex-col bg-white font-[Inter,sans-serif] text-sm text-[#1e1e1e]">
      <BrowserChrome />
      <EditorHeader />
      <div className="flex flex-1">
        <ListView />
        <Canvas />
        <SettingsSidebar />
      </div>
      <footer className="flex h-7 shrink-0 items-center border-t border-[#e0e0e0] pl-[30px]">
        {CRUMBS.map((c, i) => (
          <span key={c} className="flex items-center">
            {i > 0 && <Icon name="chevronSmall" className="mx-[5px] size-[27px]" />}
            <a href="#crumb">{c}</a>
          </span>
        ))}
      </footer>
    </div>
  );
}
